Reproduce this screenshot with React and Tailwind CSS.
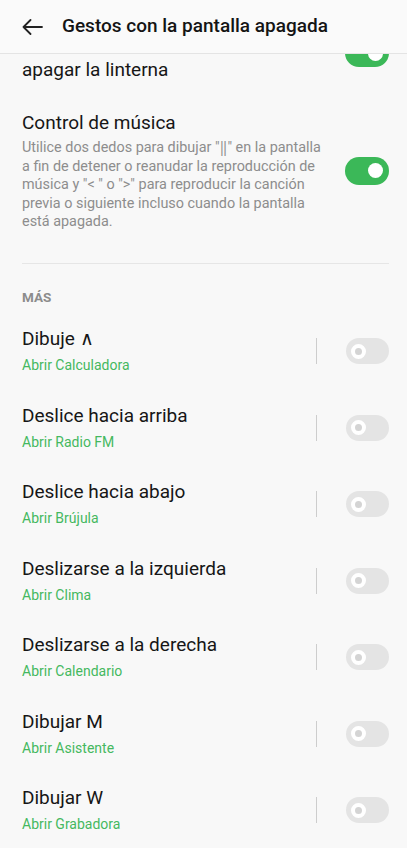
// ── Data ─────────────────────────────────────────────────────────────────────
const MORE_GESTURES = [
  { title: "Dibuje ∧", action: "Abrir Calculadora" },
  { title: "Deslice hacia arriba", action: "Abrir Radio FM" },
  { title: "Deslice hacia abajo", action: "Abrir Brújula" },
  { title: "Deslizarse a la izquierda", action: "Abrir Clima" },
  { title: "Deslizarse a la derecha", action: "Abrir Calendario" },
  { title: "Dibujar M", action: "Abrir Asistente" },
  { title: "Dibujar W", action: "Abrir Grabadora" },
];

// ── Toggle ───────────────────────────────────────────────────────────────────
function Toggle({ on = false, className = "" }) {
  if (on) {
    return (
      <div
        className={`w-[44px] h-[28px] rounded-full bg-[#3bb858] flex items-center justify-end pr-[6px] flex-shrink-0 ${className}`}
      >
        <span className="w-[15px] h-[15px] rounded-full bg-white" />
      </div>
    );
  }
  return (
    <div
      className={`w-[43px] h-[26px] rounded-full bg-[#e4e4e4] flex items-center pl-[5px] flex-shrink-0 ${className}`}
    >
      <span className="w-[15px] h-[15px] rounded-full border-[4px] border-white bg-[#d4d4d4]" />
    </div>
  );
}

// ── GestureRow ───────────────────────────────────────────────────────────────
function GestureRow({ title, action }) {
  return (
    <div className="h-[76.5px] flex items-center pl-[22px] pr-[18px]">
      <div className="flex-1 flex flex-col gap-[4px]">
        <p className="text-[19px] leading-[24px] text-[#161616]">{title}</p>
        <p className="text-[14px] leading-[20px] text-[#45b85f]">{action}</p>
      </div>
      <span className="w-px h-[26px] bg-[#cdcdcd]" />
      <Toggle className="ml-[29px]" />
    </div>
  );
}

// ── App ──────────────────────────────────────────────────────────────────────
export default function App() {
  return (
    <div
      className="w-[407px] h-[848px] overflow-hidden bg-[#f8f8f8] flex flex-col"
      style={{ fontFamily: "Roboto, 'Noto Sans', sans-serif" }}
    >
      {/* Header */}
      <header className="h-[54px] flex-shrink-0 flex items-center bg-[#fafafa] border-b border-[#e4e4e4]">
        <svg
          className="ml-[22px] w-[21px] h-[16px] text-[#222]"
          viewBox="0 0 21 16"
          fill="none"
          stroke="currentColor"
          strokeWidth="1.8"
          strokeLinecap="round"
          strokeLinejoin="round"
        >
          <path d="M20 8H1.5M8.5 1L1.5 8l7 7" />
        </svg>
        <h1 className="ml-[19px] text-[19px] font-medium text-[#141414]">
          Gestos con la pantalla apagada
        </h1>
      </header>

      {/* Flashlight item, scrolled partly under the header */}
      <div className="flex items-start pl-[22px] pr-[18px]">
        <p className="flex-1 mt-[3px] text-[19px] leading-[25px] text-[#161616]">
          apagar la linterna
        </p>
        <div className="h-[13px] overflow-hidden flex-shrink-0">
          <Toggle on className="-mt-[15px]" />
        </div>
      </div>

      {/* Music control */}
      <div className="mt-[28px] flex items-center pl-[22px] pr-[18px]">
        <div className="flex-1">
          <p className="text-[19px] leading-[25px] text-[#161616]">Control de música</p>
          <p className="mt-[4px] w-[302px] text-[14.4px] leading-[18.6px] text-[#8d8d8d]">
            Utilice dos dedos para dibujar "‖" en la pantalla a fin de detener o reanudar la
            reproducción de música y "&lt; " o "&gt;" para reproducir la canción previa o
            siguiente incluso cuando la pantalla está apagada.
          </p>
        </div>
        <Toggle on />
      </div>

      <div className="mt-[31px] ml-[22px] mr-[18px] h-px bg-[#e6e6e6] flex-shrink-0" />

      <p className="mt-[25px] pl-[22px] text-[13.5px] leading-[16px] font-bold text-[#8c8c8c]">
        MÁS
      </p>

      <div className="mt-[8px]">
        {MORE_GESTURES.map((g) => (
          <GestureRow key={g.title} title={g.title} action={g.action} />
        ))}
      </div>
    </div>
  );
}
